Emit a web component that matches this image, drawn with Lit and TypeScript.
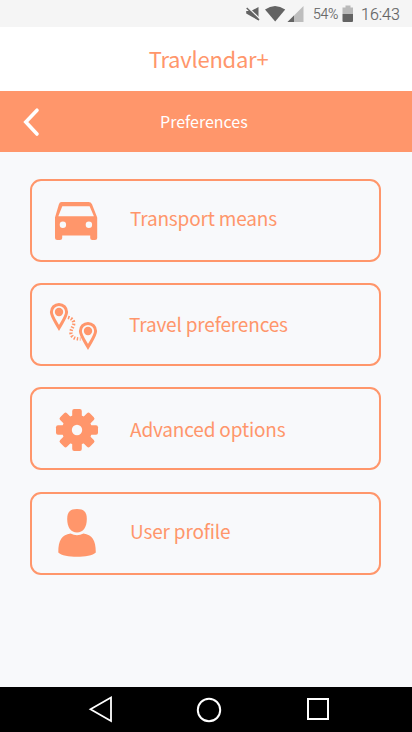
import { LitElement, html, svg, css } from "lit";
import { customElement } from "lit/decorators.js";

const carIcon = svg`<svg class="icon" viewBox="0 0 60 79">
  <path fill-rule="evenodd" d="M27.5 21H54.5Q57 21 58 23.3L63.2 36.6V57Q63.2 59 61 59H58.3Q56.2 59 56.2 57V54.6H28.2V57Q28.2 59 26 59H23.2Q21 59 21 57V36.6L24.9 23.3Q25.6 21 27.5 21ZM28.3 25.2L24.3 35.3H59.9L55.6 25.2ZM28.9 40.5a3.2 3.2 0 1 0 0 6.4a3.2 3.2 0 1 0 0-6.4ZM54.9 40.5a3.2 3.2 0 1 0 0 6.4a3.2 3.2 0 1 0 0-6.4Z"/>
</svg>`;

const pin = svg`
  <path class="pin" d="M25 19.400A7.600 7.600 0 0 1 32.600 27C32.600 31 29 36 25 43C21 36 17.400 31 17.400 27A7.600 7.600 0 0 1 25 19.400Z"/>
  <circle cx="25" cy="27" r="4.200"/>`;

const routeIcon = svg`<svg class="icon" viewBox="0 0 60 79">
  <g>${pin}</g>
  <g transform="translate(29 19)">${pin}</g>
  <path class="dash" d="M34 32.300C38.500 33.500 40.500 36.500 39.500 40C38.500 43 36.600 45 37 48.500C37.500 52 40.500 54 46.500 54"/>
</svg>`;

const gearIcon = svg`<svg class="icon" viewBox="0 0 60 79">
  <g transform="translate(43 41)">
    ${[0, 45, 90, 135].map(
      (a) => svg`<rect x="-4.800" y="-21" width="9.600" height="42" rx="2" transform="rotate(${a})"/>`
    )}
    <circle r="15"/>
    <circle class="hole" r="5.200"/>
  </g>
</svg>`;

const userIcon = svg`<svg class="icon" viewBox="0 0 60 79">
  <path d="M43 15C50 15 52.800 18 52.800 25C52.800 33.500 49 38.500 43 38.500S33.200 33.500 33.200 25C33.200 18 36 15 43 15Z"/>
  <path d="M36.500 39.500Q43 43 49.500 39.500C58 41 61.800 45.500 61.800 58.500C56 64.300 30 64.300 24.300 58.500C24.300 45.500 28 41 36.500 39.500Z"/>
</svg>`;

const items = [
  { label: "Transport means", icon: carIcon, cls: "transport" },
  { label: "Travel preferences", icon: routeIcon, cls: "travel" },
  { label: "Advanced options", icon: gearIcon, cls: "advanced" },
  { label: "User profile", icon: userIcon, cls: "user" },
];

@customElement("app-root")
export class AppRoot extends LitElement {
  static styles = css`
    :host {
      display: flex;
      flex-direction: column;
      height: 732px;
      background: #f8f9fb;
      color: #ff966b;
      font-family: "Noto Sans CJK SC", "Noto Sans", sans-serif;
      overflow: hidden;
    }
    svg { display: block; flex: none; }
    .status {
      height: 27px;
      background: #f5f5f5;
      color: #636363;
      font-family: Roboto, sans-serif;
      display: flex;
      align-items: center;
      padding-left: 244px;
      white-space: nowrap;
    }
    .pct { font-size: 14px; margin-left: 7px; width: 29px; letter-spacing: -0.3px; line-height: 27px; padding-top: 2px; font-weight: 300; -webkit-text-stroke: 0.15px #636363; }
    .clock { font-size: 16px; margin-left: 7px; line-height: 27px; padding-top: 2px; font-weight: 300; -webkit-text-stroke: 0.15px #636363; }
    .title {
      height: 64px;
      background: #fff;
      font-size: 22px;
      letter-spacing: -0.25px;
      line-height: 62px;
      text-align: center;
      padding-left: 5px;
    }
    .bar {
      height: 61px;
      background: #ff966b;
      color: #fff;
      display: flex;
      align-items: center;
      font-size: 16px;
    }
    .bar svg { margin-left: 20px; }
    .bar span { margin-left: 116px; padding-bottom: 2px; }
    .list {
      flex: 1;
      padding: 27px 31px 0 30px;
      display: flex;
      flex-direction: column;
      gap: 21px;
    }
    .card {
      box-sizing: border-box;
      height: 83px;
      border: 2px solid #ff966b;
      border-radius: 11px;
      display: flex;
      font-size: 19px;
      letter-spacing: -0.170px;
      line-height: 30px;
    }
    .card.user { margin-top: 1px; }
    .icon { width: 60px; height: 79px; margin-left: 2px; overflow: visible; fill: #ff966b; }
    .hole { fill: #f8f9fb; }
    .pin { fill: none; stroke: #ff966b; stroke-width: 3; }
    .dash { fill: none; stroke: #ff966b; stroke-width: 3.400; stroke-dasharray: 1.500 1.600; }
    .label { margin: 22px 0 0 36px; white-space: nowrap; }
    .travel .label { margin: 24px 0 0 35px; }
    .advanced .label { margin-top: 25px; }
    .user .label { margin-top: 22px; }
    .nav { height: 45px; background: #000; }
  `;

  render() {
    return html`
      <div class="status">
        <svg width="62" height="27" viewBox="244 0 62 27" fill="#636363">
          <path d="M246.200 11H251L258.500 7V20.500L251.500 16.500L246.200 13.500Z"/>
          <path d="M247.500 7L260.500 19.500" stroke="#f5f5f5" stroke-width="1.500"/>
          <path d="M246.700 8L259 20" stroke="#636363" stroke-width="1.500"/>
          <path d="M265 9.500Q275 2.500 285.200 9.500L275.200 21.500Z"/>
          <path fill="#bdbdbd" d="M303.500 6V22H287.500Z"/>
          <path d="M294 15.500V22H287.500Z"/>
        </svg>
        <span class="pct">54%</span>
        <svg width="12" height="27" viewBox="0 0 12 27">
          <path fill="#b9b9b9" d="M3.500 5.500H8.500V7.500H11V14H.5V7.500H3.500Z"/>
          <path fill="#636363" d="M.5 14H11V21Q11 22 10 22H1.500Q.5 22 .5 21Z"/>
        </svg>
        <span class="clock">16:43</span>
      </div>
      <div class="title">Travlendar+</div>
      <div class="bar">
        <svg width="24" height="36" viewBox="20 104 24 36">
          <path d="M37 110.200L25.800 122L37 134" fill="none" stroke="#fff" stroke-width="3.600" stroke-linecap="round"/>
        </svg>
        <span>Preferences</span>
      </div>
      <div class="list">
        ${items.map(
          (i) => html`<div class="card ${i.cls}">${i.icon}<span class="label">${i.label}</span></div>`
        )}
      </div>
      <div class="nav">
        <svg width="412" height="45" viewBox="0 687 412 45" fill="none" stroke="#fff" stroke-width="2">
          <path d="M90.500 709.200L111 697.500V721Z" stroke-width="1.800"/>
          <circle cx="209" cy="710" r="11.200"/>
          <rect x="308" y="699" width="20" height="20"/>
        </svg>
      </div>
    `;
  }
}
